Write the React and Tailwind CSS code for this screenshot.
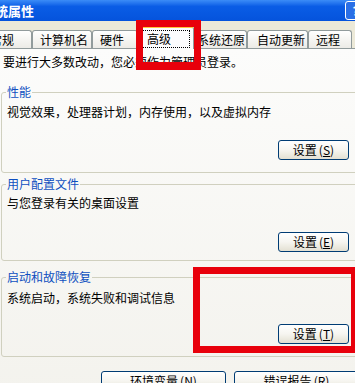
import React from 'react';

const tabs = [
  { label: '常规', w: 'w-[48px]', pl: 'pl-[5px]' },
  { label: '计算机名', w: 'w-[60px]', pl: 'pl-[7px]' },
  { label: '硬件', w: 'w-[46px]', pl: 'pl-[7px]' },
  { label: '高级', w: 'w-[56px]', selected: true },
  { label: '系统还原', w: 'w-[53px]', pl: 'pl-[2px]' },
  { label: '自动更新', w: 'w-[61px]', pl: 'pl-[9px]' },
  { label: '远程', w: 'w-[44px]', pl: 'pl-[7px]' },
];

function XpButton({ label, hotkey, className = '' }) {
  return (
    <button
      className={`flex h-[20px] items-center justify-center whitespace-nowrap rounded-[3px] border border-[#003c74] bg-linear-to-b from-white via-[#f6f5f0] to-[#e3e0d2] text-[12px] leading-[14px] text-black ${className}`}
    >
      {label}
      <span className="ml-[2px]">
        (<span className="underline">{hotkey}</span>)
      </span>
    </button>
  );
}

function Group({ title, text, hotkey, className = '', textGap, buttonGap, bottomPad }) {
  return (
    <fieldset
      className={`ml-[1px] w-[360px] rounded-[3px] border border-[#d0d0bf] pl-[5px] pr-[11px] ${bottomPad} ${className}`}
    >
      <legend className="-ml-[1px] px-[1px] text-[12px] leading-[14px] text-[#0e4fc0]">{title}</legend>
      <p className={`whitespace-nowrap text-[12px] leading-[14px] text-black ${textGap}`}>{text}</p>
      <div className={`flex justify-end ${buttonGap}`}>
        <XpButton label="设置" hotkey={hotkey} className="w-[71px]" />
      </div>
    </fieldset>
  );
}

export default function App() {
  return (
    <div className="relative h-[383px] w-[355px] overflow-hidden bg-[#ece9d8] font-['Noto_Sans_CJK_SC','Noto_Sans',sans-serif]">
      {/* title bar */}
      <div className="flex h-[21px] items-center overflow-hidden bg-linear-to-b from-[#3b8cf7] via-[#0a5de6] via-30% to-[#0553dc]">
        <span className="-ml-[5px] whitespace-nowrap text-[13px] font-bold leading-[15px] text-white">统属性</span>
        <div className="-mr-[11px] ml-auto flex h-[19px] w-[21px] shrink-0 items-center justify-center rounded-[3px] border border-white bg-[#2a6fe6] text-[12px] font-bold text-white">
          ?
        </div>
      </div>

      {/* tabs */}
      <div className="mt-[5px] flex h-[22px] items-end">
        {tabs.map((t, i) =>
          t.selected ? (
            <div
              key={t.label}
              className={`relative z-10 -mb-[1px] h-[23px] shrink-0 ${t.w} rounded-t-[3px] border-x border-t-[2px] border-x-[#919b9c] border-t-[#ffc83c] bg-[#fcfcfe] px-[3px] pt-[2px]`}
            >
              <div className="h-[18px] whitespace-nowrap border border-dotted border-black pl-[4px] text-[12px] leading-[15px] text-black">
                {t.label}
              </div>
            </div>
          ) : (
            <div
              key={t.label}
              className={`flex h-[18px] shrink-0 items-center overflow-hidden whitespace-nowrap ${t.w} ${t.pl} ${i === 0 ? '-ml-[16px]' : ''} rounded-t-[3px] border-x border-t border-[#919b9c] bg-linear-to-b from-white to-[#ecebe6] pt-[1px] text-[12px] leading-[14px] text-black`}
            >
              {t.label}
            </div>
          )
        )}
      </div>

      {/* tab page */}
      <div className="h-[400px] border-t border-[#919b9c] bg-linear-to-b from-[#fcfcfb] to-[#f2f1eb]">
        <p className="mt-[6px] whitespace-nowrap pl-[3px] text-[12px] leading-[14px] text-black">
          要进行大多数改动，您必须作为管理员登录。
        </p>

        <Group
          className="mt-[16px]"
          title="性能"
          text="视觉效果，处理器计划，内存使用，以及虚拟内存"
          hotkey="S"
          textGap="mt-[6px]"
          buttonGap="mt-[21px]"
          bottomPad="pb-[12px]"
        />
        <Group
          className="mt-[4px]"
          title="用户配置文件"
          text="与您登录有关的桌面设置"
          hotkey="E"
          textGap="mt-[5px]"
          buttonGap="mt-[22px]"
          bottomPad="pb-[8px]"
        />
        <Group
          className="mt-[9px]"
          title="启动和故障恢复"
          text="系统启动，系统失败和调试信息"
          hotkey="T"
          textGap="mt-[7px]"
          buttonGap="mt-[19px]"
          bottomPad="pb-[12px]"
        />

        <div className="ml-[101px] mt-[14px] flex gap-[8px]">
          <XpButton label="环境变量" hotkey="N" className="w-[125px] shrink-0" />
          <XpButton label="错误报告" hotkey="R" className="w-[125px] shrink-0" />
        </div>
      </div>

      {/* red annotation boxes */}
      <div className="pointer-events-none absolute left-[136px] top-[20px] z-20 h-[50px] w-[65px] border-[7px] border-b-[8px] border-[#e8000b]" />
      <div className="pointer-events-none absolute left-[193px] top-[267px] z-20 h-[86px] w-[165px] border-[7px] border-[#e8000b]" />
    </div>
  );
}
